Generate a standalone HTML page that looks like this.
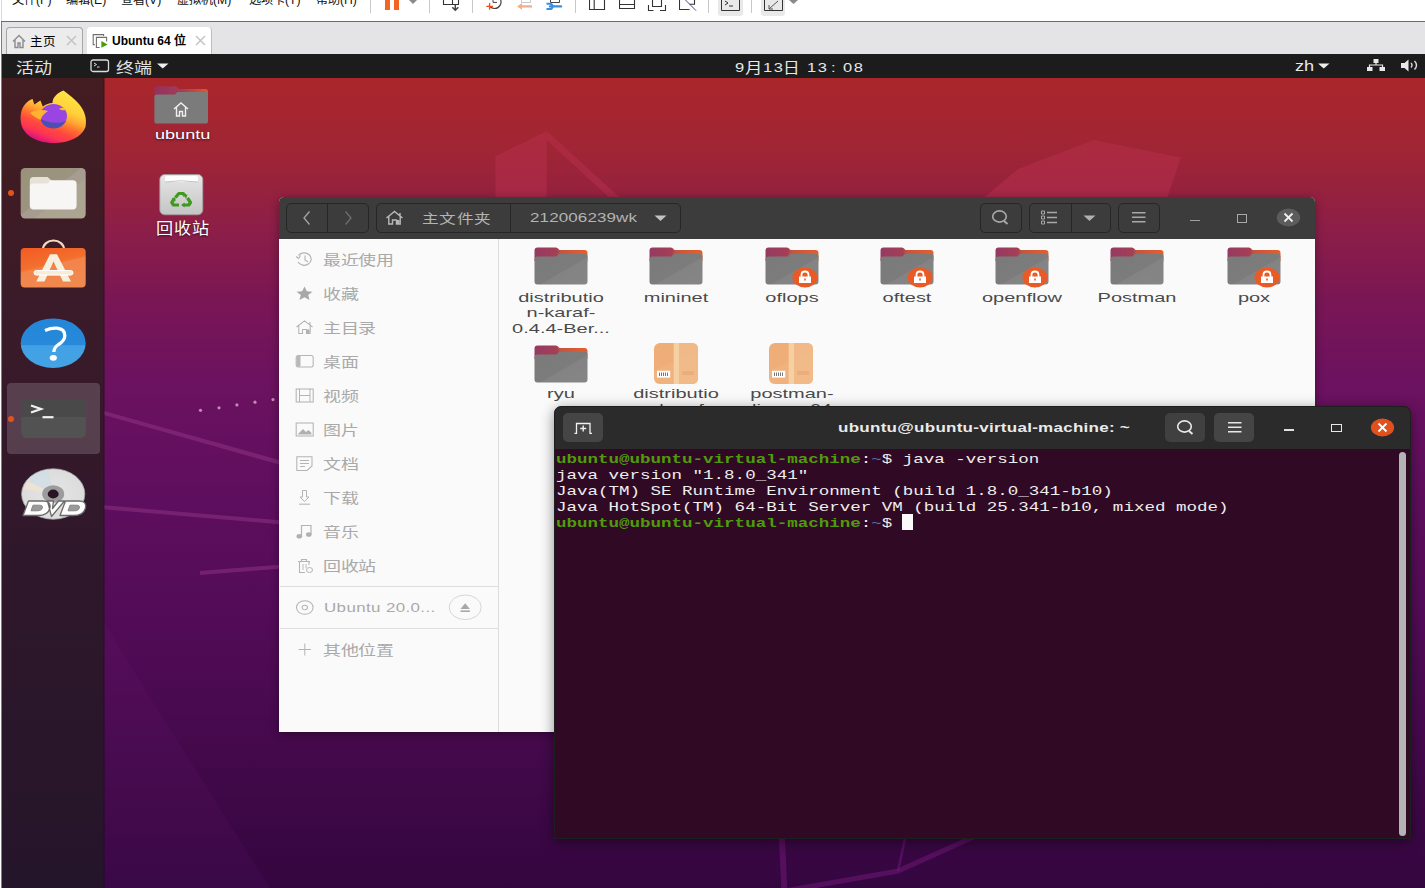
<!DOCTYPE html>
<html lang="zh-CN">
<head>
<meta charset="utf-8">
<style>
*{box-sizing:border-box;margin:0;padding:0}
html,body{width:1425px;height:888px;overflow:hidden;background:#fff}
body{position:relative;font-family:"Liberation Sans",sans-serif;}
.abs{position:absolute}
/* VMware chrome */
#menubar{left:0;top:0;width:1425px;height:21px;background:#fff;border-left:1px solid #fff}
#lframe{left:1px;top:0;width:1px;height:888px;background:#7d7d7d}
#lframe2{left:1px;top:0;width:1px;height:21px;background:#d9d9d9}
#hline{left:1px;top:21px;width:1424px;height:1px;background:#6b6b6b}
#tabbar{left:2px;top:22px;width:1423px;height:32px;background:#e4e4e6}
.menu{top:-10px;font-size:12.2px;color:#111;white-space:nowrap}
.sep{top:0;width:1px;height:13px;background:#c9c9c9}
/* VM */
#topbar{left:2px;top:54px;width:1423px;height:24px;background:#1c1c1c;color:#e6e6e6}
#wall{left:2px;top:78px;width:1423px;height:810px;overflow:hidden;
 background:linear-gradient(180deg,#aa262b 0px,#a02535 72px,#8c1e48 152px,#7a1655 222px,#6c1260 302px,#5e0e5e 422px,#540c58 522px,#4a0a50 622px,#3e0846 722px,#340640 810px)}
#dock{left:2px;top:78px;width:102px;height:810px;
 background:linear-gradient(180deg,#441c22 0px,#401c23 82px,#3b1b29 220px,#2f172b 480px,#25152a 810px)}

.hb{border:1px solid #262626;border-radius:5px;background:#3c3c3c}
.tx{white-space:nowrap}

.si{position:absolute;left:322.8px;margin-top:1px;font-size:13.5px;line-height:20px;color:#a9a9a9;letter-spacing:0.3px;white-space:nowrap;transform:scaleX(1.33);transform-origin:0 0}
.lbl{position:absolute;width:200px;margin-left:-100px;margin-top:1.5px;text-align:center;font-size:13.5px;line-height:15.5px;color:#4a4a4a;white-space:nowrap;transform:scaleX(1.48);transform-origin:50% 0}

.tl{position:absolute;left:555.5px;margin-top:1.5px;font-family:"Liberation Mono",monospace;font-size:13.6px;line-height:16px;color:#eeeeec;white-space:pre;transform:scaleX(1.288);transform-origin:0 0}
.tl b{color:#4f9c0a}
.tl i{font-style:normal;color:#4f76c0}
.dt{top:57.8px;font-size:13.2px;line-height:20px;color:#e8e8e8;white-space:nowrap;transform:scaleX(1.25);transform-origin:0 0}
</style>
</head>
<body>
<div id="menubar" class="abs"></div>
<div id="lframe" class="abs"></div>
<div id="lframe2" class="abs"></div>
<div id="hline" class="abs"></div>
<div id="tabbar" class="abs"></div>

<div class="abs menu" style="left:12px">文件(F)</div>
<div class="abs menu" style="left:66px">编辑(E)</div>
<div class="abs menu" style="left:121px">查看(V)</div>
<div class="abs menu" style="left:177px">虚拟机(M)</div>
<div class="abs menu" style="left:249px">选项卡(T)</div>
<div class="abs menu" style="left:316px">帮助(H)</div>
<div class="abs sep" style="left:370px"></div>
<div class="abs" style="left:385px;top:0;width:5px;height:10px;background:#f26522"></div>
<div class="abs" style="left:394px;top:0;width:5px;height:10px;background:#f26522"></div>
<svg class="abs" style="left:408px;top:0" width="10" height="5"><path d="M1 0H9L5 4Z" fill="#8a8a8a"/></svg>
<div class="abs sep" style="left:429px"></div>
<svg class="abs" style="left:442px;top:0" width="19" height="12"><path d="M1.5 -1V4.5H16.5V-1M10.5 -1V4.5" stroke="#333" stroke-width="1.1" fill="none"/><path d="M13.3 4.5V10M10.3 7.3L13.3 10.3L16.3 7.3" stroke="#444" fill="none" stroke-width="1.5"/></svg>
<div class="abs sep" style="left:472px"></div>
<svg class="abs" style="left:485px;top:0" width="18" height="12"><path d="M4 5.5A6.5 6.5 0 1 0 9.5 -4.5" stroke="#444" stroke-width="1.2" fill="none"/><path d="M8 -1V2.4H12" stroke="#444" stroke-width="1" fill="none"/><path d="M1.3 6.3H8M4.6 3V9.8" stroke="#f0521a" stroke-width="1.3"/></svg>
<svg class="abs" style="left:516px;top:0" width="18" height="12"><path d="M5.5 -1V2.5H14.5V-1" stroke="#c8c8c8" stroke-width="1" fill="none"/><path d="M4.5 6.4H16" stroke="#f2b088" stroke-width="2.3"/><path d="M1 6.4L6 3V9.8Z" fill="#f2b088"/></svg>
<svg class="abs" style="left:545px;top:0" width="18" height="12"><path d="M5.5 -1V2.5H14.5V-1" stroke="#444" stroke-width="1" fill="none"/><path d="M5 6.4H16" stroke="#3a8ee0" stroke-width="2.4" stroke-linecap="round"/><path d="M1.5 3.8H4.5Q7.5 3.8 7.5 6.4Q7.5 9 4.5 9H1.5" stroke="#3a8ee0" stroke-width="2" fill="none"/></svg>
<div class="abs sep" style="left:575px"></div>
<svg class="abs" style="left:589px;top:0" width="17" height="11"><path d="M0.5 -1V9.5H15.5V-1M5.2 -1V9.5" stroke="#333" stroke-width="1.1" fill="none"/></svg>
<svg class="abs" style="left:619px;top:0" width="17" height="11"><path d="M0.5 -1V8.5H15.5V-1M0.5 4.5H15.5" stroke="#333" stroke-width="1.1" fill="none"/></svg>
<svg class="abs" style="left:647px;top:0" width="20" height="12"><path d="M5.5 -1V6.5H14.5V-1" stroke="#333" stroke-width="1.1" fill="none"/><path d="M1.5 5V10.5H6.5M13 10.5H18.5V5" stroke="#333" stroke-width="1.1" fill="none"/></svg>
<svg class="abs" style="left:679px;top:0" width="19" height="12"><path d="M0.5 -1V9.5H10.5M10.5 4.3H15.5V-1" stroke="#333" stroke-width="1.1" fill="none"/><path d="M6 -0.5L17 10.6" stroke="#3d4a8a" stroke-width="1" fill="none"/></svg>
<div class="abs sep" style="left:708px"></div>
<div class="abs" style="left:718px;top:-4px;width:25px;height:20px;background:#e9e9e9;border-radius:3px"></div>
<svg class="abs" style="left:721px;top:0" width="19" height="12"><path d="M0.5 0V10.5H18.5V0" stroke="#333" fill="none"/><path d="M4 1L7 3L4 5" stroke="#333" fill="none"/><path d="M8 6H12" stroke="#333"/></svg>
<div class="abs sep" style="left:751px"></div>
<div class="abs" style="left:761px;top:-4px;width:24px;height:20px;background:#e9e9e9;border-radius:3px"></div>
<svg class="abs" style="left:764px;top:0" width="19" height="12"><path d="M0.5 0V10.5H18.5V0" stroke="#333" fill="none"/><path d="M5 9L14 1M5 5V9H9" stroke="#555" fill="none"/></svg>
<svg class="abs" style="left:789px;top:0" width="10" height="5"><path d="M0 0H9L4.5 4Z" fill="#8a8a8a"/></svg>
<!-- tabs -->
<div class="abs" style="left:6px;top:27px;width:77px;height:28px;background:#ececec;border:1px solid #a6a6a6;border-bottom:none;border-radius:4px 4px 0 0"></div>
<svg class="abs" style="left:12px;top:34px" width="15" height="15"><path d="M1 7.5L7 1.5L13 7.5M3 6V13.5H6V9H8V13.5H11V6" stroke="#8c8c8c" stroke-width="1.4" fill="none"/></svg>
<div class="abs" style="left:30px;top:31.5px;font-size:12.5px;line-height:20px;color:#000">主页</div>
<svg class="abs" style="left:66px;top:35px" width="11" height="11"><path d="M1 1L10 10M10 1L1 10" stroke="#c4c4c4" stroke-width="1.5"/></svg>
<div class="abs" style="left:87px;top:27px;width:125px;height:28px;background:#fff;border-radius:4px 4px 0 0;border-right:1px solid #bdbdbd"></div>
<svg class="abs" style="left:92px;top:33px" width="17" height="16"><path d="M2.8 11.6H1.2V1.6H11.6V2.9" stroke="#707070" stroke-width="1.1" fill="none"/><path d="M7.6 14.5H4.4V4.4H14.6V8.4" stroke="#707070" stroke-width="1.1" fill="none"/><path d="M9.4 8.1L15.6 11.5L9.4 14.8Z" fill="#4a9a0a"/></svg>
<div class="abs" style="left:112px;top:31px;font-size:12px;line-height:20px;font-weight:bold;color:#000;white-space:nowrap">Ubuntu 64 位</div>
<svg class="abs" style="left:195px;top:35px" width="11" height="11"><path d="M1 1L10 10M10 1L1 10" stroke="#c4c4c4" stroke-width="1.5"/></svg>
<div id="topbar" class="abs"></div>
<div id="wall" class="abs"></div>


<svg class="abs" style="left:0;top:0" width="1425" height="888">
<path d="M495.4 156.3L546.7 131V200H495.4Z" fill="#b8304c" opacity="0.5"/>
<path d="M546.7 131L622.5 200H612L546.7 140Z" fill="#b8304c" opacity="0.5"/>
<path d="M981 200L1017.9 169L1093.7 140.1L1181 157.4L1166.3 200Z" fill="#b8304c" opacity="0.5"/>
<path d="M104 411L279 460V464.5L104 415Z" fill="#9a3a8c" opacity="0.45"/>
<path d="M104 505.3L279 520.2V524.2L104 509.3Z" fill="#9a3a8c" opacity="0.45"/>
<path d="M200 571L279 564.8V568.8L200 575Z" fill="#9a3a8c" opacity="0.45"/>
<path d="M104 620L120 649L270 888H104Z" fill="#8a2a9a" opacity="0.08"/>
<g fill="#c08cb4"><circle cx="200.5" cy="410.3" r="1.6"/><circle cx="219" cy="407.8" r="1.6"/><circle cx="236.9" cy="404.9" r="1.6"/><circle cx="255" cy="402.2" r="1.6"/><circle cx="273" cy="399.6" r="1.6"/></g>
<path d="M781.5 830L784.5 892" stroke="#7a1a80" stroke-width="6" fill="none" opacity="0.45"/><path d="M784.5 891L898 871L980 834" stroke="#7a1a80" stroke-width="5" fill="none" opacity="0.45"/><path d="M898 871L906 834" stroke="#7a1a80" stroke-width="2.5" fill="none" opacity="0.45"/>
</svg>
<div id="dock" class="abs"></div><div class="abs" style="left:103px;top:78px;width:1px;height:810px;background:rgba(0,0,0,.12)"></div><div class="abs" style="left:104px;top:78px;width:1px;height:810px;background:rgba(25,8,25,.35)"></div>
<!-- dock icons -->
<svg class="abs" style="left:15px;top:85px" width="80" height="65">
<defs><linearGradient id="ffg" x1="0.8" y1="0.1" x2="0.35" y2="1">
<stop offset="0" stop-color="#ffe443"/><stop offset="0.3" stop-color="#ffcf3a"/><stop offset="0.45" stop-color="#ffa632"/><stop offset="0.58" stop-color="#ff702e"/><stop offset="0.7" stop-color="#ff4a3e"/><stop offset="0.84" stop-color="#ff3452"/><stop offset="1" stop-color="#d8117f"/></linearGradient></defs>
<path d="M48.5 5.5C54 10 60 14 64 19C70 26 72 34 70.5 42C67 52 54 58 39 58C24 58 10 52 6.5 40C4.5 32 6 24 9.5 20C12 16.5 15 14.5 17.6 13.9L19.3 19.5L25.4 15.6L27.8 21.5C31 19.2 34 18.2 37.5 18C37.5 12.5 42 8 48.5 5.5Z" fill="url(#ffg)"/>
<ellipse cx="38.5" cy="31" rx="13.5" ry="12" fill="#9845e2"/>
<path d="M25.5 34C27 40 32 43.5 38.5 43.5C44 43.5 49 40.5 51 36C44 39 33 38 25.5 34Z" fill="#4f4fb3"/>
<path d="M15 28C20 25 27 24 33 26C30 28 26.5 31 25.5 35C22 33 18 31 15 28Z" fill="#ffb330"/>
<path d="M44 24C47 22 50 22.5 51.5 25C49 25.5 46.5 25.5 44 24Z" fill="#ffbb31"/>
</svg>
<div class="abs" style="left:8px;top:190px;width:6px;height:6px;border-radius:50%;background:#e2521c"></div>
<svg class="abs" style="left:20px;top:167px" width="67" height="53">
<defs><linearGradient id="fbg" x1="0" y1="0" x2="1" y2="1"><stop offset="0" stop-color="#9a917b"/><stop offset="0.46" stop-color="#9d9480"/><stop offset="0.47" stop-color="#a69d90"/><stop offset="0.6" stop-color="#a69d90"/><stop offset="0.61" stop-color="#aba491"/><stop offset="1" stop-color="#aca591"/></linearGradient></defs>
<rect x="0.7" y="1" width="65" height="50.5" rx="4.5" fill="url(#fbg)"/>
<path d="M9.8 14Q9.8 10 13.5 10H27.5L31.5 13.5V20H9.8Z" fill="#e6e2d8"/>
<path d="M9.8 20.5Q9.8 16.6 13.5 16.6H27.5L30.7 13.3H52.8Q56.6 13.3 56.6 17V38.5Q56.6 42.4 52.7 42.4H13.7Q9.8 42.4 9.8 38.5Z" fill="#f7f6f4"/>
</svg>
<svg class="abs" style="left:20px;top:239px" width="67" height="50">
<defs><linearGradient id="sbg" x1="0" y1="0" x2="0.4" y2="1"><stop offset="0" stop-color="#f25a22"/><stop offset="0.5" stop-color="#f3702e"/><stop offset="0.55" stop-color="#f3844b"/><stop offset="1" stop-color="#f0894e"/></linearGradient></defs>
<path d="M23 10.5A10.5 9 0 0 1 44 10.5" stroke="#f2dcc0" stroke-width="2.2" fill="none"/>
<rect x="0.7" y="9" width="65" height="39.5" rx="4" fill="url(#sbg)"/>
<path d="M16.3 42.4L30 15.3H37L51 42.4H43L33.5 22.5L24.5 42.4Z" fill="#f8f0de"/>
<rect x="14" y="31.5" width="39" height="4.6" rx="2.3" fill="#f8ecd8" stroke="#fff" stroke-width="1"/>
</svg>
<svg class="abs" style="left:20px;top:317px" width="67" height="53">
<defs><linearGradient id="hbg" x1="0" y1="0" x2="0" y2="1"><stop offset="0" stop-color="#2386d8"/><stop offset="0.53" stop-color="#2889da"/><stop offset="0.55" stop-color="#42a1e4"/><stop offset="1" stop-color="#44a3e5"/></linearGradient></defs>
<ellipse cx="33.2" cy="26.2" rx="32.5" ry="24.8" fill="url(#hbg)"/>
<path d="M25 13.5Q31 10.8 37 11.2Q45 12 44.8 19Q44.5 24 38.5 27.5Q34 30.5 33.8 35" stroke="#fff" stroke-width="3.3" fill="none" stroke-linecap="butt"/>
<ellipse cx="33.3" cy="40.8" rx="3.6" ry="2.9" fill="#fff"/>
</svg>
<div class="abs" style="left:7px;top:383px;width:93px;height:71px;border-radius:4px;background:rgba(255,255,255,0.17)"></div>
<div class="abs" style="left:8px;top:416px;width:6px;height:6px;border-radius:50%;background:#e2521c"></div>
<svg class="abs" style="left:21px;top:398px" width="66" height="41">
<rect x="0.3" y="1" width="64.5" height="39" rx="5" fill="#525252"/>
<path d="M0.3 6Q0.3 1 5.3 1H59.8Q64.8 1 64.8 6V19H0.3Z" fill="#494949"/>
<path d="M10 7.5L20 11L10 14.5" stroke="#f2f2f2" stroke-width="2.2" fill="none"/>
<path d="M21.5 19.2H32.5" stroke="#f2f2f2" stroke-width="2.2"/>
</svg>
<svg class="abs" style="left:20px;top:467px" width="67" height="55">
<defs><radialGradient id="dvg" cx="0.5" cy="0.5" r="0.5"><stop offset="0.2" stop-color="#bdbdbd"/><stop offset="0.35" stop-color="#e2e2e2"/><stop offset="1" stop-color="#dcdcdc"/></radialGradient></defs>
<ellipse cx="33.2" cy="27" rx="31.6" ry="25.2" fill="url(#dvg)" stroke="#a8a8a8" stroke-width="0.8"/>
<path d="M33.2 27L8 14Q14 5 28 2.5Z" fill="#cfdde6" opacity="0.8"/>
<path d="M33.2 27L4 22Q5 17 8 14Z" fill="#efe3d2" opacity="0.8"/>
<ellipse cx="33.2" cy="27" rx="11" ry="8.8" fill="#9c9c9c"/>
<ellipse cx="33.2" cy="27" rx="5.5" ry="4.4" fill="#2a1424"/>
<path d="M3 48.5L8.5 34H23Q31 34 30 40.5Q28.5 48.5 18 48.5Z M27.5 34H33.5L32.5 41.5L38.5 34H44.5L31.5 49.5Z M40 48.5L45.5 34H59Q66.5 34 65.5 40.5Q64 48.5 53.5 48.5Z" fill="#fdfdfd" stroke="#6a6a6a" stroke-width="1.3" stroke-linejoin="round"/><path d="M11 43.8L13 38.2H19.5Q23 38.2 22.4 40.8Q21.8 43.8 17 43.8Z M48 43.8L50 38.2H56.5Q60 38.2 59.4 40.8Q58.8 43.8 54 43.8Z" fill="#9a9a9a" stroke="#777" stroke-width="0.8"/>
</svg>
<!-- desktop icons -->
<svg class="abs" style="left:153px;top:85px" width="57" height="40">
<defs><linearGradient id="ftab" x1="0" y1="0" x2="1" y2="0"><stop offset="0" stop-color="#94305f"/><stop offset="0.5" stop-color="#a23d55"/><stop offset="1" stop-color="#e0582a"/></linearGradient></defs>
<path d="M1.4 4.5Q1.4 1.3 4.5 1.3H22Q23.5 1.3 24.5 2.5L26 4H52.5Q55 4 55 6.5V14H1.4Z" fill="url(#ftab)"/>
<path d="M1.4 12Q1.4 9.5 4 9.5H22L24.5 7H52.5Q55 7 55 9.5V36Q55 38.6 52.4 38.6H4Q1.4 38.6 1.4 36Z" fill="#7b7b7b"/>
<path d="M21 24L28 18L35 24M23.5 22.5V31H26.5V26.5H29.5V31H32.5V22.5" stroke="#f0f0f0" stroke-width="1.4" fill="none"/>
</svg>
<div class="abs" style="left:155px;top:125.5px;font-size:13.5px;line-height:18px;color:#fff;text-shadow:0 1px 2px rgba(0,0,0,.6);transform:scaleX(1.34);transform-origin:0 0">ubuntu</div>
<svg class="abs" style="left:159px;top:173px" width="45" height="43">
<defs><linearGradient id="tbg" x1="0" y1="0" x2="0" y2="1"><stop offset="0" stop-color="#e6e6e6"/><stop offset="1" stop-color="#c4c4c4"/></linearGradient></defs>
<rect x="0.8" y="1.5" width="43" height="40.3" rx="5" fill="url(#tbg)" stroke="#9a9a9a" stroke-width="0.8"/>
<path d="M6 9V4.5Q6 3 8 3H37Q39 3 39 4.5V9Z" fill="#fdfdfd"/>
<path d="M6 9Q22 6.5 39 9" stroke="#b5b5b5" stroke-width="0.8" fill="none"/>
<g stroke="#3f9a1e" stroke-width="3.2" fill="none" stroke-linejoin="round"><path d="M16.5 24.5L19.8 20.5H24.2L26 23"/><path d="M28.5 25L31.5 29.5L29.8 32H25"/><path d="M20 32H14.5L12.8 29.5L14.8 26.5"/></g><g fill="#3f9a1e"><path d="M24.5 21.5L28.5 21.5L27 26Z"/><path d="M25.5 29.5V34.5L22 32Z"/><path d="M12.5 25.5L16.5 24L16.5 28.5Z"/></g>
</svg>
<div class="abs" style="left:156px;top:219px;font-size:16px;letter-spacing:1px;line-height:20px;color:#fff;text-shadow:0 1px 2px rgba(0,0,0,.6);transform:scaleX(1.07);transform-origin:0 0">回收站</div>


<div class="abs" style="left:16px;top:57.5px;font-size:15px;letter-spacing:0px;line-height:20px;color:#e2e2e2;transform:scaleX(1.2);transform-origin:0 0">活动</div>
<svg class="abs" style="left:90px;top:59px" width="20" height="14"><rect x="1" y="1" width="17.5" height="11.5" rx="2" stroke="#dcdcdc" stroke-width="1.3" fill="none"/><path d="M4 4L6.5 5.5L4 7M7 8H9.5" stroke="#dcdcdc" stroke-width="1" fill="none"/></svg>
<div class="abs" style="left:115.5px;top:57.5px;font-size:15px;letter-spacing:0px;line-height:20px;color:#e2e2e2;transform:scaleX(1.2);transform-origin:0 0">终端</div>
<svg class="abs" style="left:157px;top:63px" width="12" height="6"><path d="M0 0.5H11.5L5.75 5.5Z" fill="#eee"/></svg>
<div class="abs dt" style="left:734.5px">9</div><div class="abs dt" style="left:745px;top:57.5px;font-size:14.5px;transform:scaleX(1.2)">月</div><div class="abs dt" style="left:762.5px;letter-spacing:1.3px">13</div><div class="abs dt" style="left:782.5px;top:57.5px;font-size:14.5px;transform:scaleX(1.15)">日</div><div class="abs dt" style="left:806.5px;letter-spacing:1.3px">13</div><div class="abs dt" style="left:831px">:</div><div class="abs dt" style="left:842.5px;letter-spacing:1.3px">08</div>
<div class="abs" style="left:1295px;top:56px;font-size:14px;line-height:20px;color:#e8e8e8;transform:scaleX(1.3);transform-origin:0 0">zh</div>
<svg class="abs" style="left:1318px;top:63px" width="12" height="6"><path d="M0 0.5H11.5L5.75 5.5Z" fill="#eee"/></svg>
<svg class="abs" style="left:1367px;top:59px" width="18" height="12"><rect x="6.5" y="0" width="5" height="4" fill="#e8e8e8"/><rect x="0" y="8" width="5.5" height="4" fill="#e8e8e8"/><rect x="12.5" y="8" width="5.5" height="4" fill="#e8e8e8"/><path d="M9 4V6M2.5 8V6H15.5V8" stroke="#e8e8e8" stroke-width="1.2" fill="none"/></svg>
<svg class="abs" style="left:1401px;top:59px" width="18" height="13"><path d="M0 4H3.5L7.5 0.5V12.5L3.5 9H0Z" fill="#e8e8e8"/><path d="M10 4Q12 6.2 10 8.5M13.5 2Q17.5 6.2 13.5 10.5" stroke="#d8d8d8" stroke-width="1.4" fill="none"/></svg>

<!-- FILES WINDOW -->
<div class="abs" style="left:279px;top:197px;width:1036px;height:535px;border-radius:5px 5px 0 0;box-shadow:0 2px 10px rgba(0,0,0,.35);background:#fafafa;overflow:hidden">
 <div class="abs" style="left:0;top:0;width:1036px;height:42px;background:#3c3c3c"></div>
 <div class="abs" style="left:219px;top:42px;width:1px;height:493px;background:#dedede"></div>
</div>
<!-- header buttons -->
<div class="abs hb" style="left:286px;top:203px;width:83px;height:30px"></div>
<div class="abs" style="left:327px;top:204px;width:1px;height:28px;background:#262626"></div>
<svg class="abs" style="left:302px;top:210px" width="10" height="16"><path d="M7.5 1.5L2 8L7.5 14.5" stroke="#a5a5a5" stroke-width="1.3" fill="none"/></svg>
<svg class="abs" style="left:343px;top:210px" width="10" height="16"><path d="M2.5 1.5L8 8L2.5 14.5" stroke="#6e6e6e" stroke-width="1.3" fill="none"/></svg>
<div class="abs hb" style="left:376px;top:203px;width:305px;height:30px"></div>
<div class="abs" style="left:510px;top:204px;width:1px;height:28px;background:#262626"></div>
<svg class="abs" style="left:385px;top:210px" width="21" height="16"><path d="M1.5 8L9.5 1.5L17.5 8M3.8 6.5V14H7.5V10H11.5V14H15.2V6.5M15 3V5.5" stroke="#b8b8b8" stroke-width="1.4" fill="none"/><rect x="11.5" y="10" width="3" height="4" fill="#b8b8b8"/></svg>
<div class="abs tx" style="left:422px;top:209px;font-size:13px;letter-spacing:0.6px;color:#b4b4b4;line-height:20px;transform:scaleX(1.28);transform-origin:0 0">主文件夹</div>
<div class="abs tx" style="left:529.5px;top:208px;font-size:13.7px;letter-spacing:0.1px;color:#b4b4b4;line-height:20px;transform:scaleX(1.24);transform-origin:0 0">212006239wk</div>
<svg class="abs" style="left:654px;top:215px" width="14" height="7"><path d="M0.5 0.5H12.5L6.5 6Z" fill="#c3c3c3"/></svg>
<div class="abs hb" style="left:980px;top:203px;width:42px;height:30px"></div>
<svg class="abs" style="left:990px;top:208px" width="22" height="20"><ellipse cx="9.5" cy="8.5" rx="6.8" ry="5.6" stroke="#a8a8a8" stroke-width="1.6" fill="none"/><path d="M14 13L17.5 16" stroke="#a8a8a8" stroke-width="2"/></svg>
<div class="abs hb" style="left:1029px;top:203px;width:82px;height:30px"></div>
<div class="abs" style="left:1071px;top:204px;width:1px;height:28px;background:#262626"></div>
<svg class="abs" style="left:1041px;top:210px" width="18" height="15"><path d="M0.5 1h3v3h-3zM0.5 6h3v3h-3zM0.5 11h3v3h-3z" stroke="#a8a8a8" stroke-width="1" fill="none"/><path d="M6 2.5H16M6 7.5H16M6 12.5H16" stroke="#a8a8a8" stroke-width="1.5"/></svg>
<svg class="abs" style="left:1083px;top:215px" width="14" height="7"><path d="M0.5 0.5H12.5L6.5 6Z" fill="#b0b0b0"/></svg>
<div class="abs hb" style="left:1118px;top:203px;width:42px;height:30px"></div>
<svg class="abs" style="left:1131px;top:211px" width="16" height="13"><path d="M1 1.8H14.5M1 6.3H14.5M1 10.8H14.5" stroke="#a8a8a8" stroke-width="1.5"/></svg>
<div class="abs" style="left:1190px;top:220px;width:10px;height:1.2px;background:#a0a0a0"></div>
<div class="abs" style="left:1236.5px;top:214px;width:10.5px;height:8.5px;border:1.2px solid #a8a8a8"></div>
<svg class="abs" style="left:1276px;top:208px" width="25" height="20"><ellipse cx="12.5" cy="9.5" rx="11.7" ry="9" fill="#5c5c5c"/><path d="M8.5 5.5L16.5 13.5M16.5 5.5L8.5 13.5" stroke="#f0f0f0" stroke-width="1.8"/></svg>

<!-- SIDEBAR -->
<svg class="abs" width="0" height="0" style="left:0;top:0">
<defs>
<linearGradient id="ftab2" x1="0" y1="0" x2="1" y2="0"><stop offset="0" stop-color="#963a62"/><stop offset="0.42" stop-color="#a43f55"/><stop offset="0.5" stop-color="#c4553f"/><stop offset="1" stop-color="#e4602c"/></linearGradient>
<linearGradient id="fbody" x1="0" y1="0" x2="1" y2="1"><stop offset="0" stop-color="#7a7a7a"/><stop offset="0.55" stop-color="#7c7c7c"/><stop offset="0.56" stop-color="#838383"/><stop offset="1" stop-color="#868686"/></linearGradient>
<symbol id="folder" viewBox="0 0 54 38">
<path d="M0.5 3.5Q0.5 0.5 3.5 0.5H21.5Q23 0.5 24 1.5L25.5 3H50.5Q53.5 3 53.5 6V14H0.5Z" fill="url(#ftab2)"/>
<path d="M0.5 12.5Q0.5 9.5 3.5 9.5H22.5L25 6.8H50.5Q53.5 6.8 53.5 9.8V34.5Q53.5 37.5 50.5 37.5H3.5Q0.5 37.5 0.5 34.5Z" fill="url(#fbody)"/>
</symbol>
<symbol id="lock" viewBox="0 0 26 21">
<ellipse cx="13" cy="10.5" rx="12.6" ry="10" fill="#e95b26"/>
<path d="M9.5 10V8Q9.5 4.5 13 4.5Q16.5 4.5 16.5 8V10" stroke="#fff" stroke-width="1.8" fill="none"/>
<rect x="7" y="9.5" width="12" height="6.5" fill="#fff"/>
<rect x="12.2" y="11.5" width="1.6" height="2" fill="#e95b26"/>
</symbol>
<symbol id="pkg" viewBox="0 0 44 41">
<rect x="0" y="0" width="44" height="41" rx="6" fill="#efae78"/>
<path d="M22 0H38Q44 0 44 6V35Q44 41 38 41H22Z" fill="#f1b987"/>
<path d="M0 28L44 8V35Q44 41 38 41H6Q0 41 0 35Z" fill="#f2bc8b" opacity="0.4"/>
<rect x="19.7" y="0" width="5.3" height="41" fill="#f5d0a3"/>
<rect x="3" y="27.8" width="13.2" height="6.8" fill="#fff"/>
<path d="M5.5 29.5V33M7.5 29.5V33M9.5 29.5V33M11.5 29.5V33M13.5 29.5V33" stroke="#777" stroke-width="1"/>
<path d="M28 29H40M28 31H40" stroke="#e99d6a" stroke-width="0.9"/>
</symbol>
</defs></svg>
<svg class="abs" style="left:295px;top:251px" width="20" height="17"><path d="M3.5 4.5A7 6.2 0 1 1 3 11" stroke="#b4b4b4" stroke-width="1.2" fill="none"/><path d="M1 5.5L3.7 7.5L5.5 4.5" stroke="#b4b4b4" stroke-width="1.05" fill="none"/><path d="M10 4.5V9L13 11" stroke="#b4b4b4" stroke-width="1.1" fill="none"/></svg>
<div class="si" style="top:250px">最近使用</div>
<svg class="abs" style="left:295px;top:285px" width="20" height="17"><path d="M9.5 1.5L11.8 6.2L17.5 6.7L13.2 10L14.6 15L9.5 12.3L4.4 15L5.8 10L1.5 6.7L7.2 6.2Z" fill="#a8a8a8"/></svg>
<div class="si" style="top:284px">收藏</div>
<svg class="abs" style="left:295px;top:319px" width="20" height="17"><path d="M1.5 8L9.5 1.8L17.5 8M3.8 6.5V14.5H7.5V10.5H11.5V14.5H15.2V6.5M15 3V5.5" stroke="#b4b4b4" stroke-width="1.05" fill="none"/><rect x="11.5" y="10.5" width="3" height="4" fill="#b0b0b0"/></svg>
<div class="si" style="top:318px">主目录</div>
<svg class="abs" style="left:295px;top:353px" width="20" height="17"><rect x="1.2" y="2.5" width="17" height="11.5" rx="2" stroke="#b4b4b4" stroke-width="1.05" fill="none"/><rect x="1.5" y="3" width="4" height="10.5" fill="#b8b8b8"/></svg>
<div class="si" style="top:352px">桌面</div>
<svg class="abs" style="left:295px;top:387px" width="20" height="17"><rect x="1.2" y="2" width="17" height="13" stroke="#b4b4b4" stroke-width="1.05" fill="none"/><path d="M4.5 2V15M15 2V15M4.5 8.5H15" stroke="#b4b4b4" stroke-width="1.0"/></svg>
<div class="si" style="top:386px">视频</div>
<svg class="abs" style="left:295px;top:421px" width="20" height="17"><rect x="1.2" y="2" width="17" height="13" stroke="#b4b4b4" stroke-width="1.05" fill="none"/><path d="M3 13L8 8L11 11L13.5 9L16.5 12V13.5H3Z" fill="#b0b0b0"/></svg>
<div class="si" style="top:420px">图片</div>
<svg class="abs" style="left:295px;top:455px" width="20" height="17"><path d="M1.8 1.8H17V11L12 15.5H1.8Z" stroke="#b4b4b4" stroke-width="1.05" fill="none"/><path d="M5 5.5H14M5 8.5H14M5 11.5H10" stroke="#b4b4b4" stroke-width="1.0"/></svg>
<div class="si" style="top:454px">文档</div>
<svg class="abs" style="left:295px;top:489px" width="20" height="17"><path d="M7.5 1.5V8H5L9.5 12.5L14 8H11.5V1.5Z" stroke="#b4b4b4" stroke-width="1.0" fill="none"/><path d="M4 15.2H15" stroke="#b4b4b4" stroke-width="1.05"/></svg>
<div class="si" style="top:488px">下载</div>
<svg class="abs" style="left:295px;top:523px" width="20" height="17"><path d="M6.5 13V2.5H16V11" stroke="#b4b4b4" stroke-width="1.2" fill="none"/><ellipse cx="4.3" cy="13.3" rx="2.8" ry="2.3" fill="#b0b0b0"/><ellipse cx="13.8" cy="11.5" rx="2.8" ry="2.3" fill="#b0b0b0"/></svg>
<div class="si" style="top:522px">音乐</div>
<svg class="abs" style="left:295px;top:557px" width="20" height="17"><path d="M3 4.5H15M6.5 4.5V2.5H11.5V4.5M4.5 4.5V15.5H10M14 4.5V8" stroke="#b4b4b4" stroke-width="1.05" fill="none"/><path d="M8 7V13M11 7V11" stroke="#b4b4b4" stroke-width="0.9"/><ellipse cx="14.5" cy="13" rx="3" ry="2.5" stroke="#b4b4b4" stroke-width="1.0" fill="none"/></svg>
<div class="si" style="top:556px">回收站</div>
<div class="abs" style="left:280px;top:586px;width:218px;height:1px;background:#dedede"></div>
<svg class="abs" style="left:295px;top:599px" width="20" height="17"><ellipse cx="9.8" cy="8.5" rx="8.3" ry="6.8" stroke="#b4b4b4" stroke-width="1.05" fill="none"/><ellipse cx="9.8" cy="8.5" rx="2.7" ry="2.2" stroke="#b4b4b4" stroke-width="1.05" fill="none"/></svg>
<div class="abs tx" style="left:324px;top:598px;font-size:13px;line-height:20px;color:#a9a9a9;letter-spacing:0.3px;transform:scaleX(1.3);transform-origin:0 0">Ubuntu 20.0...</div>
<svg class="abs" style="left:448px;top:594px" width="35" height="27"><ellipse cx="17.2" cy="13.3" rx="16" ry="12.3" fill="#fafafa" stroke="#d6d6d6" stroke-width="1"/><path d="M12.5 15L17.2 9.3L21.9 15Z" fill="#a8a8a8"/><rect x="12.5" y="16.4" width="9.4" height="1.6" fill="#a8a8a8"/></svg>
<div class="abs" style="left:280px;top:628px;width:218px;height:1px;background:#dedede"></div>
<svg class="abs" style="left:295px;top:641px" width="20" height="17"><path d="M9.8 2.5V14.5M3.5 8.5H16" stroke="#b4b4b4" stroke-width="1.0"/></svg>
<div class="si" style="top:640px">其他位置</div>
<!-- GRID -->
<svg class="abs" style="left:534px;top:247px" width="54" height="38"><use href="#folder"/></svg>
<svg class="abs" style="left:649px;top:247px" width="54" height="38"><use href="#folder"/></svg>
<svg class="abs" style="left:765px;top:247px" width="54" height="38"><use href="#folder"/></svg>
<svg class="abs" style="left:880px;top:247px" width="54" height="38"><use href="#folder"/></svg>
<svg class="abs" style="left:995px;top:247px" width="54" height="38"><use href="#folder"/></svg>
<svg class="abs" style="left:1110px;top:247px" width="54" height="38"><use href="#folder"/></svg>
<svg class="abs" style="left:1227px;top:247px" width="54" height="38"><use href="#folder"/></svg>
<svg class="abs" style="left:792px;top:267px" width="26" height="21"><use href="#lock"/></svg>
<svg class="abs" style="left:907px;top:267px" width="26" height="21"><use href="#lock"/></svg>
<svg class="abs" style="left:1022px;top:267px" width="26" height="21"><use href="#lock"/></svg>
<svg class="abs" style="left:1254px;top:267px" width="26" height="21"><use href="#lock"/></svg>
<div class="lbl" style="left:561px;top:288px">distributio<br>n-karaf-<br>0.4.4-Ber...</div>
<div class="lbl" style="left:676px;top:288px">mininet</div>
<div class="lbl" style="left:792px;top:288px">oflops</div>
<div class="lbl" style="left:907px;top:288px">oftest</div>
<div class="lbl" style="left:1022px;top:288px">openflow</div>
<div class="lbl" style="left:1137px;top:288px">Postman</div>
<div class="lbl" style="left:1254px;top:288px">pox</div>
<svg class="abs" style="left:534px;top:345px" width="54" height="38"><use href="#folder"/></svg>
<svg class="abs" style="left:654px;top:343px" width="44" height="41"><use href="#pkg"/></svg>
<svg class="abs" style="left:769px;top:343px" width="44" height="41"><use href="#pkg"/></svg>
<div class="lbl" style="left:561px;top:384px">ryu</div>
<div class="lbl" style="left:676px;top:384px">distributio<br>n-karaf-</div>
<div class="lbl" style="left:792px;top:384px">postman-<br>linux-x64</div>

<!-- TERMINAL -->
<div class="abs" style="left:554px;top:406px;width:857px;height:433px;border-radius:7px 7px 0 0;background:#300a24;box-shadow:0 3px 14px rgba(0,0,0,.45);border:1px solid #1e1e1e;overflow:hidden">
 <div class="abs" style="left:0;top:0;width:857px;height:42px;background:#2b2b2b"></div>
</div>
<div class="abs" style="left:563px;top:413px;width:40px;height:29px;border-radius:5px;background:#454545"></div>
<svg class="abs" style="left:574px;top:422px" width="19" height="12"><path d="M0.5 11.3H2.5V1.5H16V11.3H18" stroke="#f0f0f0" stroke-width="1.3" fill="none"/><path d="M9.2 3.5V9.5M6.2 6.5H12.2" stroke="#f0f0f0" stroke-width="1.4"/></svg>
<div class="abs tx" style="left:837.5px;top:420px;font-size:12.5px;line-height:16px;font-weight:bold;color:#eaeaea;letter-spacing:0.2px;transform:scaleX(1.36);transform-origin:0 0">ubuntu@ubuntu-virtual-machine: ~</div>
<div class="abs" style="left:1165px;top:413px;width:40px;height:29px;border-radius:5px;background:#404040"></div>
<svg class="abs" style="left:1175px;top:418px" width="22" height="20"><ellipse cx="9.5" cy="8.5" rx="6.8" ry="5.6" stroke="#e8e8e8" stroke-width="1.6" fill="none"/><path d="M14 13L17.5 16" stroke="#e8e8e8" stroke-width="2"/></svg>
<div class="abs" style="left:1214px;top:413px;width:40px;height:29px;border-radius:5px;background:#454545"></div>
<svg class="abs" style="left:1227px;top:421px" width="16" height="13"><path d="M1 1.8H14.5M1 6.3H14.5M1 10.8H14.5" stroke="#e8e8e8" stroke-width="1.5"/></svg>
<div class="abs" style="left:1284px;top:429px;width:10px;height:1.5px;background:#e0e0e0"></div>
<div class="abs" style="left:1331px;top:424px;width:10.5px;height:8px;border:1.5px solid #e8e8e8"></div>
<svg class="abs" style="left:1370px;top:418px" width="25" height="20"><ellipse cx="12.5" cy="9.5" rx="11.6" ry="9" fill="#e2511c"/><path d="M8.5 5.5L16.5 13.5M16.5 5.5L8.5 13.5" stroke="#fff" stroke-width="1.8"/></svg>
<div class="abs" style="left:1399px;top:452px;width:7px;height:384px;border-radius:4px;background:#b4b4b4"></div>
<div class="tl" style="top:450px"><b>ubuntu@ubuntu-virtual-machine</b>:<i>~</i>$ java -version</div>
<div class="tl" style="top:466px">java version "1.8.0_341"</div>
<div class="tl" style="top:482px">Java(TM) SE Runtime Environment (build 1.8.0_341-b10)</div>
<div class="tl" style="top:498px">Java HotSpot(TM) 64-Bit Server VM (build 25.341-b10, mixed mode)</div>
<div class="tl" style="top:514px"><b>ubuntu@ubuntu-virtual-machine</b>:<i>~</i>$ </div>
<div class="abs" style="left:901.5px;top:513.5px;width:11px;height:16.5px;background:#fafafa"></div>
</body>
</html>
